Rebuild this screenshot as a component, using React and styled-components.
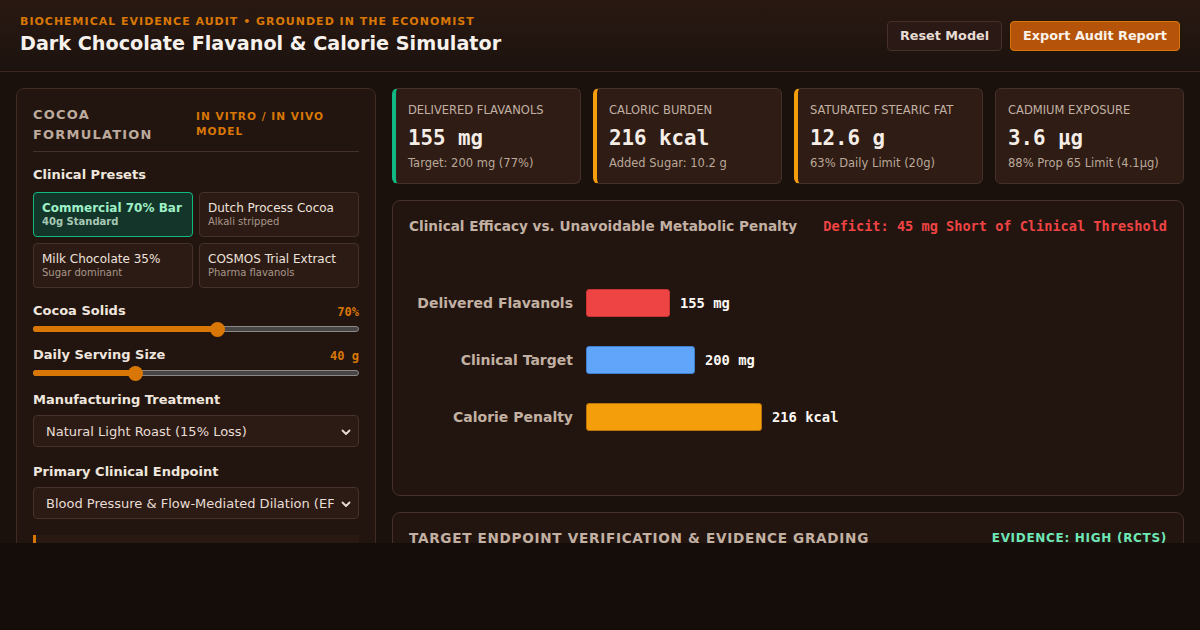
import React from "react";
import styled, { createGlobalStyle } from "styled-components";

const Global = createGlobalStyle`
  html, body { margin: 0; padding: 0; background: #150d0a; }
  body { font-family: "DejaVu Sans", "Noto Sans", sans-serif; color: #eee4dc; }
  * { box-sizing: border-box; }
`;

const Shell = styled.div`
  height: 543px;
  overflow: hidden;
  background: #1a110d;
`;

const Header = styled.header`
  height: 72px;
  display: flex;
  align-items: center;
  justify-content: space-between;
  padding: 0 20px;
  background: linear-gradient(180deg, #2a1912 0%, #1c120e 100%);
  border-bottom: 1px solid #3b2820;
`;

const TitleBlock = styled.div`
  display: flex;
  flex-direction: column;
  gap: 4px;
  margin-top: -1px;
`;

const Eyebrow = styled.div`
  font-size: 11px;
  font-weight: bold;
  letter-spacing: 1px;
  color: #d97706;
  text-transform: uppercase;
`;

const Title = styled.h1`
  margin: 0;
  font-size: 19.2px;
  font-weight: bold;
  color: #f7f1ec;
`;

const Actions = styled.div`
  display: flex;
  gap: 8px;
`;

const Button = styled.button`
  font-family: inherit;
  height: 30px;
  padding: 0 12px;
  border-radius: 4px;
  font-size: 12.8px;
  font-weight: bold;
  cursor: pointer;
  color: ${(p) => (p.$primary ? "#fbf3ea" : "#e8ddd5")};
  background: ${(p) => (p.$primary ? "#b45309" : "#2a1914")};
  border: 1px solid ${(p) => (p.$primary ? "#d97706" : "#45302a")};
`;

const Main = styled.main`
  display: grid;
  grid-template-columns: 360px minmax(0, 1fr);
  gap: 16px;
  padding: 16px;
  align-items: start;
`;

const Panel = styled.section`
  background: #22150f;
  border: 1px solid #3f2b22;
  border-radius: 8px;
  padding: 16px;
`;

const PanelHead = styled.div`
  display: flex;
  justify-content: space-between;
  align-items: flex-start;
  gap: 12px;
  padding-bottom: 6px;
  border-bottom: 1px solid #44302a;
  margin-bottom: 15px;
`;

const PanelTitle = styled.h2`
  margin: 0;
  font-size: 13px;
  font-weight: bold;
  letter-spacing: 1.2px;
  line-height: 20px;
  color: #bcaa9c;
  text-transform: uppercase;
  width: 140px;
`;

const PanelTag = styled.span`
  font-size: 10.6px;
  font-weight: bold;
  letter-spacing: 1px;
  line-height: 15px;
  color: #d97706;
  text-transform: uppercase;
  width: 163px;
  padding-top: 4px;
`;

const FieldLabel = styled.div`
  font-size: 13px;
  line-height: 16px;
  font-weight: bold;
  color: #efe6de;
  margin-bottom: ${(p) => p.$mb ?? 8}px;
`;

const PresetGrid = styled.div`
  display: grid;
  grid-template-columns: minmax(0, 1fr) minmax(0, 1fr);
  gap: 6px;
  margin-bottom: 15px;
`;

const Preset = styled.div`
  height: 45px;
  border-radius: 4px;
  padding: 8px 8px 0;
  background: ${(p) => (p.$active ? "#14352a" : "#2c1b15")};
  border: 1px solid ${(p) => (p.$active ? "#10b981" : "#45302a")};
  display: flex;
  flex-direction: column;
  gap: 1px;
  overflow: hidden;
`;

const PresetName = styled.div`
  font-size: 12px;
  line-height: 14px;
  font-weight: ${(p) => (p.$active ? "bold" : "normal")};
  color: ${(p) => (p.$active ? "#9ef0c7" : "#ece2da")};
  white-space: nowrap;
`;

const PresetSub = styled.div`
  font-size: 10px;
  line-height: 12px;
  font-weight: ${(p) => (p.$active ? "bold" : "normal")};
  color: ${(p) => (p.$active ? "#a7c9b4" : "#a8978a")};
  white-space: nowrap;
`;

const SliderRow = styled.div`
  display: flex;
  justify-content: space-between;
  align-items: center;
  height: 16px;
`;

const SliderValue = styled.span`
  font-family: "DejaVu Sans Mono", monospace;
  font-size: 12px;
  font-weight: bold;
  color: #d97706;
  padding-top: 2px;
`;

const Track = styled.div`
  position: relative;
  height: 6px;
  margin: 7px 0 ${(p) => p.$mb ?? 15}px;
  border-radius: 3px;
  background: #474545;
  border: 1px solid #8a8886;
`;

const Fill = styled.div`
  position: absolute;
  left: -1px;
  top: -1px;
  bottom: -1px;
  background: #d97706;
  border-radius: 3px 0 0 3px;
`;

const Thumb = styled.div`
  position: absolute;
  top: 50%;
  width: 15px;
  height: 15px;
  margin: -7.5px 0 0 -7.5px;
  border-radius: 50%;
  background: #d97706;
`;

const SelectBox = styled.div`
  position: relative;
  height: 32px;
  display: flex;
  align-items: center;
  padding: 0 24px 0 12px;
  background: #2c1b15;
  border: 1px solid #45302a;
  border-radius: 4px;
  font-size: 13px;
  color: #e8ddd5;
  margin-bottom: ${(p) => p.$mb ?? 16}px;
`;

const SelectText = styled.span`
  flex: 1;
  min-width: 0;
  white-space: nowrap;
  overflow: hidden;
`;

const Chevron = styled.svg`
  position: absolute;
  right: 6px;
  top: 10px;
`;

const Note = styled.div`
  height: 40px;
  background: #2a1912;
  border-left: 3px solid #d97706;
`;

const RightCol = styled.div`
  display: flex;
  flex-direction: column;
  gap: 16px;
  min-width: 0;
`;

const Stats = styled.div`
  display: grid;
  grid-template-columns: repeat(4, minmax(0, 1fr));
  gap: 12px;
`;

const Stat = styled.div`
  height: 96px;
  background: #2e1c15;
  border: 1px solid #45302a;
  border-left: ${(p) => (p.$accent ? `4px solid ${p.$accent}` : "1px solid #45302a")};
  border-radius: 6px;
  padding: 14px 12px 0 12px;
  display: flex;
  flex-direction: column;
`;

const StatLabel = styled.div`
  font-size: 11.5px;
  line-height: 14px;
  color: #c2b1a3;
  text-transform: uppercase;
  white-space: nowrap;
`;

const StatValue = styled.div`
  font-family: "DejaVu Sans Mono", monospace;
  font-size: 20.8px;
  line-height: 25px;
  font-weight: bold;
  color: #f5ede6;
  margin-top: 9px;
`;

const StatSub = styled.div`
  font-size: 11.5px;
  line-height: 14px;
  color: #bba899;
  margin-top: 5px;
  white-space: nowrap;
`;

const Card = styled.section`
  background: #22150f;
  border: 1px solid #45302a;
  border-radius: 8px;
  padding: 16px;
`;

const CardHead = styled.div`
  display: flex;
  justify-content: space-between;
  align-items: center;
  gap: 12px;
`;

const CardTitle = styled.h3`
  margin: 0;
  font-size: 13.6px;
  line-height: 18px;
  font-weight: bold;
  color: #c2b1a3;
  letter-spacing: ${(p) => (p.$caps ? "0.7px" : "0")};
  text-transform: ${(p) => (p.$caps ? "uppercase" : "none")};
  white-space: nowrap;
`;

const Deficit = styled.span`
  font-family: "DejaVu Sans Mono", monospace;
  font-size: 13.6px;
  font-weight: bold;
  color: #ef4444;
  white-space: nowrap;
`;

const Evidence = styled.span`
  font-size: 12px;
  font-weight: bold;
  letter-spacing: 0.7px;
  color: #6ee7b7;
  white-space: nowrap;
`;

const Chart = styled.div`
  height: 244px;
  display: flex;
  flex-direction: column;
  justify-content: center;
  gap: 29px;
  padding-top: 5px;
`;

const BarRow = styled.div`
  display: grid;
  grid-template-columns: 164px 1fr;
  gap: 13px;
  align-items: center;
`;

const BarLabel = styled.div`
  text-align: right;
  font-size: 14px;
  font-weight: bold;
  color: #c2b1a3;
`;

const BarLine = styled.div`
  display: flex;
  align-items: center;
  gap: 10px;
`;

const Bar = styled.div`
  height: 28px;
  border-radius: 3px;
  background: ${(p) => p.$color};
  border: 1px solid ${(p) => p.$edge};
`;

const BarValue = styled.span`
  font-family: "DejaVu Sans Mono", monospace;
  font-size: 13.8px;
  font-weight: bold;
  color: #fbf7f3;
`;

const presets = [
  { name: "Commercial 70% Bar", sub: "40g Standard", active: true },
  { name: "Dutch Process Cocoa", sub: "Alkali stripped" },
  { name: "Milk Chocolate 35%", sub: "Sugar dominant" },
  { name: "COSMOS Trial Extract", sub: "Pharma flavanols" },
];

const stats = [
  { label: "Delivered Flavanols", value: "155 mg", sub: "Target: 200 mg (77%)", accent: "#10b981" },
  { label: "Caloric Burden", value: "216 kcal", sub: "Added Sugar: 10.2 g", accent: "#f59e0b" },
  { label: "Saturated Stearic Fat", value: "12.6 g", sub: "63% Daily Limit (20g)", accent: "#f59e0b" },
  { label: "Cadmium Exposure", value: "3.6 µg", sub: "88% Prop 65 Limit (4.1µg)" },
];

const bars = [
  { label: "Delivered Flavanols", width: 84, color: "#ef4444", edge: "#c93434", value: "155 mg" },
  { label: "Clinical Target", width: 109, color: "#60a5fa", edge: "#3f7fd0", value: "200 mg" },
  { label: "Calorie Penalty", width: 176, color: "#f59e0b", edge: "#b8740a", value: "216 kcal" },
];

function Slider({ pct, mb }) {
  return (
    <Track $mb={mb}>
      <Fill style={{ width: `${pct}%` }} />
      <Thumb style={{ left: `${pct}%` }} />
    </Track>
  );
}

function Select({ children, mb }) {
  return (
    <SelectBox $mb={mb}>
      <SelectText>{children}</SelectText>
      <Chevron width="12" height="12" viewBox="0 0 12 12">
        <path d="M2.5 4.5 L6 8 L9.5 4.5" fill="none" stroke="#e8ddd5" strokeWidth="1.8" strokeLinecap="round" strokeLinejoin="round" />
      </Chevron>
    </SelectBox>
  );
}

export default function App() {
  return (
    <>
      <Global />
      <Shell>
        <Header>
          <TitleBlock>
            <Eyebrow>Biochemical Evidence Audit • Grounded in The Economist</Eyebrow>
            <Title>Dark Chocolate Flavanol &amp; Calorie Simulator</Title>
          </TitleBlock>
          <Actions>
            <Button>Reset Model</Button>
            <Button $primary>Export Audit Report</Button>
          </Actions>
        </Header>
        <Main>
          <Panel>
            <PanelHead>
              <PanelTitle>Cocoa Formulation</PanelTitle>
              <PanelTag>In Vitro / In Vivo Model</PanelTag>
            </PanelHead>
            <FieldLabel $mb={9}>Clinical Presets</FieldLabel>
            <PresetGrid>
              {presets.map((p) => (
                <Preset key={p.name} $active={p.active}>
                  <PresetName $active={p.active}>{p.name}</PresetName>
                  <PresetSub $active={p.active}>{p.sub}</PresetSub>
                </Preset>
              ))}
            </PresetGrid>
            <SliderRow>
              <FieldLabel $mb={0}>Cocoa Solids</FieldLabel>
              <SliderValue>70%</SliderValue>
            </SliderRow>
            <Slider pct={56.7} mb={15} />
            <SliderRow>
              <FieldLabel $mb={0}>Daily Serving Size</FieldLabel>
              <SliderValue>40 g</SliderValue>
            </SliderRow>
            <Slider pct={31.2} mb={16} />
            <FieldLabel $mb={7}>Manufacturing Treatment</FieldLabel>
            <Select mb={17}>Natural Light Roast (15% Loss)</Select>
            <FieldLabel $mb={7}>Primary Clinical Endpoint</FieldLabel>
            <Select mb={16}>Blood Pressure &amp; Flow-Mediated Dilation (EFSA)</Select>
            <Note />
          </Panel>
          <RightCol>
            <Stats>
              {stats.map((s) => (
                <Stat key={s.label} $accent={s.accent}>
                  <StatLabel>{s.label}</StatLabel>
                  <StatValue>{s.value}</StatValue>
                  <StatSub>{s.sub}</StatSub>
                </Stat>
              ))}
            </Stats>
            <Card>
              <CardHead>
                <CardTitle>Clinical Efficacy vs. Unavoidable Metabolic Penalty</CardTitle>
                <Deficit>Deficit: 45 mg Short of Clinical Threshold</Deficit>
              </CardHead>
              <Chart>
                {bars.map((b) => (
                  <BarRow key={b.label}>
                    <BarLabel>{b.label}</BarLabel>
                    <BarLine>
                      <Bar $color={b.color} $edge={b.edge} style={{ width: b.width }} />
                      <BarValue>{b.value}</BarValue>
                    </BarLine>
                  </BarRow>
                ))}
              </Chart>
            </Card>
            <Card>
              <CardHead>
                <CardTitle $caps>Target Endpoint Verification &amp; Evidence Grading</CardTitle>
                <Evidence>EVIDENCE: HIGH (RCTS)</Evidence>
              </CardHead>
            </Card>
          </RightCol>
        </Main>
      </Shell>
    </>
  );
}
